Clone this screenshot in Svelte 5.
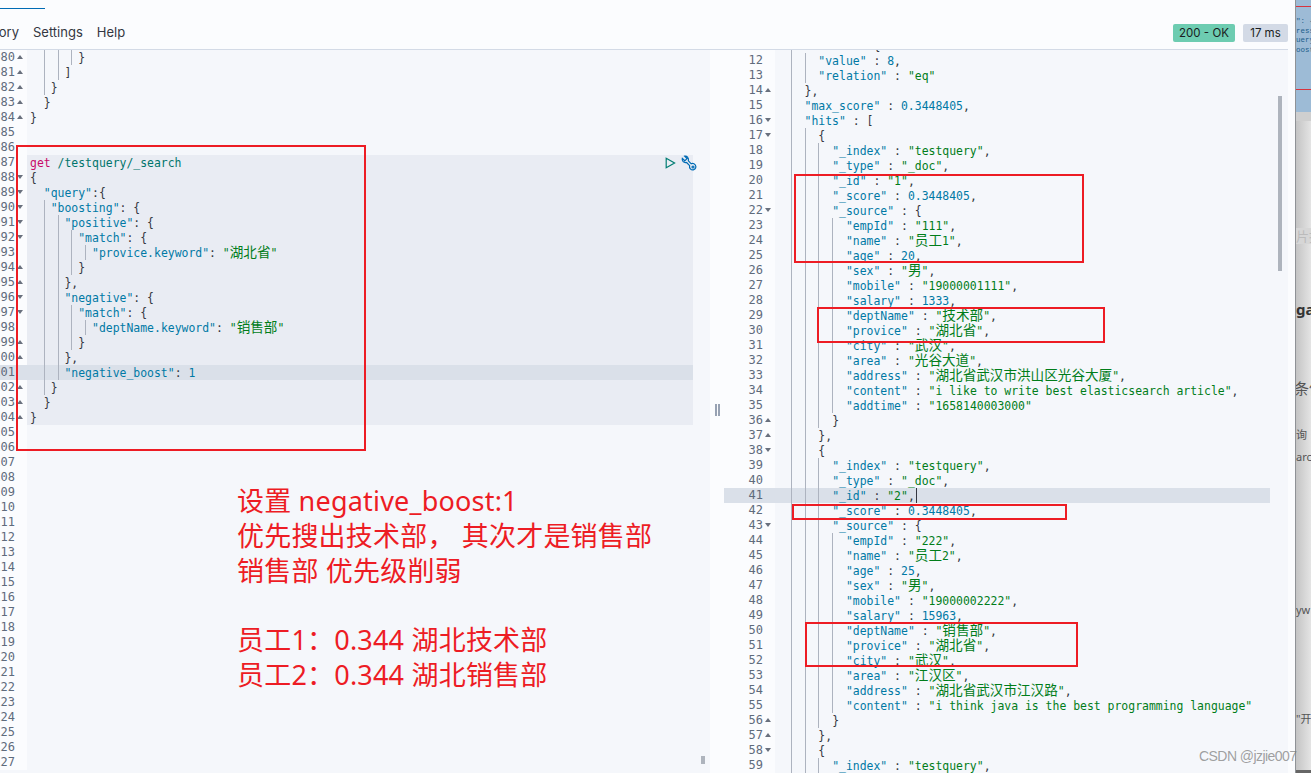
<script>
  const leftSrc = [
    [1080, "       }", "u"],
    [1081, "     ]", "u"],
    [1082, "   }", "u"],
    [1083, "  }", "u"],
    [1084, "}", "u"],
    [1085, ""],
    [1086, ""],
    [1087, "get /testquery/_search"],
    [1088, "{", "d"],
    [1089, '  "query":{', "d"],
    [1090, '   "boosting": {', "d"],
    [1091, '     "positive": {', "d"],
    [1092, '       "match": {', "d"],
    [1093, '         "provice.keyword": "湖北省"'],
    [1094, "       }", "u"],
    [1095, "     },", "u"],
    [1096, '     "negative": {', "d"],
    [1097, '       "match": {', "d"],
    [1098, '         "deptName.keyword": "销售部"'],
    [1099, "       }", "u"],
    [1100, "     },", "u"],
    [1101, '     "negative_boost": 1'],
    [1102, "   }", "u"],
    [1103, "  }", "u"],
    [1104, "}", "u"]
  ];
  for (let n = 1105; n <= 1127; n++) leftSrc.push([n, ""]);

  const rightSrc = [
    [11, '    "total" : {', "d"],
    [12, '      "value" : 8,'],
    [13, '      "relation" : "eq"'],
    [14, "    },", "u"],
    [15, '    "max_score" : 0.3448405,'],
    [16, '    "hits" : [', "d"],
    [17, "      {", "d"],
    [18, '        "_index" : "testquery",'],
    [19, '        "_type" : "_doc",'],
    [20, '        "_id" : "1",'],
    [21, '        "_score" : 0.3448405,'],
    [22, '        "_source" : {', "d"],
    [23, '          "empId" : "111",'],
    [24, '          "name" : "员工1",'],
    [25, '          "age" : 20,'],
    [26, '          "sex" : "男",'],
    [27, '          "mobile" : "19000001111",'],
    [28, '          "salary" : 1333,'],
    [29, '          "deptName" : "技术部",'],
    [30, '          "provice" : "湖北省",'],
    [31, '          "city" : "武汉",'],
    [32, '          "area" : "光谷大道",'],
    [33, '          "address" : "湖北省武汉市洪山区光谷大厦",'],
    [34, '          "content" : "i like to write best elasticsearch article",'],
    [35, '          "addtime" : "1658140003000"'],
    [36, "        }", "u"],
    [37, "      },", "u"],
    [38, "      {", "d"],
    [39, '        "_index" : "testquery",'],
    [40, '        "_type" : "_doc",'],
    [41, '        "_id" : "2",'],
    [42, '        "_score" : 0.3448405,'],
    [43, '        "_source" : {', "d"],
    [44, '          "empId" : "222",'],
    [45, '          "name" : "员工2",'],
    [46, '          "age" : 25,'],
    [47, '          "sex" : "男",'],
    [48, '          "mobile" : "19000002222",'],
    [49, '          "salary" : 15963,'],
    [50, '          "deptName" : "销售部",'],
    [51, '          "provice" : "湖北省",'],
    [52, '          "city" : "武汉",'],
    [53, '          "area" : "江汉区",'],
    [54, '          "address" : "湖北省武汉市江汉路",'],
    [55, '          "content" : "i think java is the best programming language"'],
    [56, "        }", "u"],
    [57, "      },", "u"],
    [58, "      {", "d"],
    [59, '        "_index" : "testquery",']
  ];

  const notes = [
    "设置 negative_boost:1",
    "优先搜出技术部， 其次才是销售部",
    "销售部 优先级削弱",
    "\u00a0",
    "员工1：0.344 湖北技术部",
    "员工2：0.344 湖北销售部"
  ];

  const bits = [
    { y: 228, cls: "tag", t: "片找" },
    { y: 301, cls: "bold", t: "ga" },
    { y: 380, cls: "big", t: "条件" },
    { y: 427, cls: "small", t: "询" },
    { y: 449, cls: "small", t: "arc" },
    { y: 602, cls: "small", t: "yw" },
    { y: 711, cls: "small", t: '"开' }
  ];

  // split one source line into coloured pieces
  function tokens(text) {
    const out = [];
    if (text.startsWith("get ")) {
      out.push({ c: "method", t: "get" }, { c: "", t: " " }, { c: "url", t: text.slice(4) });
      return out;
    }
    const re = /"[^"]*"(\s*:)?|-?\d+(\.\d+)?|[^"\d]+/g;
    let m;
    while ((m = re.exec(text))) {
      const s = m[0];
      if (s[0] === '"' && m[1]) {
        const end = s.lastIndexOf('"') + 1;
        out.push({ c: "key", t: s.slice(0, end) }, { c: "", t: s.slice(end) });
      } else if (s[0] === '"') {
        s.split(/([\u4e00-\u9fff]+)/).forEach((part, i) => {
          if (part) out.push({ c: i % 2 ? "str cjk" : "str", t: part });
        });
      } else if (/^-?\d/.test(s)) {
        out.push({ c: "num", t: s });
      } else {
        out.push({ c: "", t: s });
      }
    }
    return out;
  }

  function parse([n, src, fold]) {
    const body = src.trimStart();
    const indent = src.length - body.length;
    const guides = [];
    for (let col = 2; col < indent; col += 2) guides.push(src.slice(col, Math.min(col + 2, indent)));
    return { n, fold, lead: src.slice(0, Math.min(indent, 2)), guides, parts: tokens(body) };
  }

  const left = leftSrc.map(parse);
  const right = rightSrc.map(parse);
</script>

{#snippet line(row, cls)}
  <div class="row {cls}">
    <div class="gut">
      <span>{row.n}</span>
      <i class="fold {row.fold || ''}"></i>
    </div>
    <div class="code">{row.lead}{#each row.guides as g}<span class="guide">{g}</span>{/each}{#each row.parts as p}<span class={p.c}>{p.t}</span>{/each}{#if row.n === 41}<span class="cursor"></span>{/if}</div>
  </div>
{/snippet}

<div class="screen">
  <div class="app">
    <div class="topbar">
      <div class="tabline"></div>
      <nav>
        <span>History</span>
        <span>Settings</span>
        <span>Help</span>
      </nav>
      <div class="badges">
        <span class="badge ok">200 - OK</span>
        <span class="badge time">17 ms</span>
      </div>
    </div>

    <div class="panes">
      <section class="pane input">
        {#each left as row}
          {@render line(row, (row.n >= 1087 && row.n <= 1104 ? "sel " : "") + (row.n === 1101 ? "active" : ""))}
        {/each}
        <div class="tools">
          <svg width="11" height="12" viewBox="0 0 11 12" fill="none" stroke="#017d73" stroke-width="1.2"><path d="M1.2 1.2 L9.6 6 L1.2 10.8 Z" /></svg>
          <svg width="16" height="16" viewBox="0 0 16 16" fill="none" stroke="#006bb4" stroke-width="1.2"><path d="M3.6 1.2 L6 3.6 L3.8 5.8 L1.3 3.4 C0.6 6 2.8 8.2 5.6 7.5 L8.6 10.6 C8 13.2 10 15.2 12.4 14.8 C14.8 14.2 15.6 11.6 14.2 9.8 C13 8.4 11.4 8.2 10.2 8.8 L7.4 5.8 C8 3 5.8 0.6 3.6 1.2 Z" /><circle cx="12" cy="12" r="1" /></svg>
        </div>
        <div class="thumb"></div>
      </section>

      <div class="split"><b></b><b></b></div>

      <section class="pane output">
        <div class="scroller">
          {#each right as row}
            {@render line(row, row.n === 41 ? "active" : "")}
          {/each}
        </div>
        <div class="scrollbar"></div>
      </section>
    </div>
  </div>

  <aside class="strip">
    <div class="shot">
      <span>{'": {'}</span>
      <span>ress</span>
      <span>uery</span>
      <span>oost</span>
    </div>
    <div class="band"></div>
    {#each bits as b}
      <span class="bit {b.cls}" style="top: {b.y}px">{b.t}</span>
    {/each}
    <div class="foot"></div>
  </aside>

  <div class="box b1"></div>
  <div class="box b2"></div>
  <div class="box b3"></div>
  <div class="box b4"></div>
  <div class="box b5"></div>

  <div class="notes">
    {#each notes as t}
      <div>{t}</div>
    {/each}
  </div>

  <div class="mark">CSDN @jzjie007</div>
</div>

<style>
  :global(body) {
    margin: 0;
    background: #fff;
  }

  .screen {
    position: relative;
    display: flex;
    width: 1311px;
    height: 773px;
    overflow: hidden;
  }

  .app {
    width: 1295px;
    display: flex;
    flex-direction: column;
    background: #fbfcfe;
    font-family: Inter, "Noto Sans", sans-serif;
  }

  .topbar {
    position: relative;
    flex: none;
    height: 49px;
    margin-right: 7px;
    display: flex;
    align-items: flex-start;
    justify-content: space-between;
    border-bottom: 1px solid #d3dae6;
  }

  .tabline {
    position: absolute;
    left: 0;
    top: 8px;
    width: 45px;
    height: 1px;
    background: #006bb4;
  }

  nav {
    display: flex;
    gap: 14px;
    margin: 24px 0 0 -25px;
    font-size: 13px;
    line-height: 16px;
    color: #343741;
  }

  .badges {
    display: flex;
    gap: 8px;
    margin-top: 24px;
  }

  .badge {
    height: 18px;
    line-height: 18px;
    border-radius: 2px;
    font-size: 11.5px;
    text-align: center;
    color: #1a1c21;
  }

  .ok {
    width: 62px;
    background: #6dccb1;
  }

  .time {
    width: 45px;
    background: #d3dae6;
  }

  .panes {
    flex: 1;
    min-height: 0;
    display: flex;
    padding-right: 7px;
  }

  .pane {
    position: relative;
    overflow: hidden;
    background: #f5f7fb;
    font-family: "DejaVu Sans Mono", monospace;
    font-size: 11.45px;
    line-height: 17px;
  }

  .input {
    width: 710px;
    flex: none;
    padding-right: 17px;
    box-sizing: border-box;
  }

  .output {
    flex: 1;
    padding-right: 18px;
  }

  .scroller {
    margin-top: -12px;
  }

  .split {
    width: 14px;
    flex: none;
    display: flex;
    justify-content: center;
    align-items: center;
    gap: 1px;
    height: 720px;
  }

  .split b {
    width: 2px;
    height: 12px;
    background: #98a2b3;
  }

  .row {
    display: flex;
    height: 15px;
  }

  .row.sel {
    background: #e9ecf3;
  }

  .row.active {
    background: #dae0e9;
  }

  .gut {
    flex: none;
    display: flex;
    justify-content: flex-end;
    align-items: center;
    overflow: hidden;
    background: #fbfcfe;
    color: #5f6b7c;
    font-size: 12px;
  }

  .row.active .gut {
    background: #dae0e9;
  }

  .input .gut {
    width: 27px;
  }

  .output .gut {
    width: 51px;
  }

  .fold {
    flex: none;
    width: 12px;
    height: 5px;
    position: relative;
  }

  .fold.u::after,
  .fold.d::after {
    content: "";
    position: absolute;
    left: 2px;
    border-left: 3.5px solid transparent;
    border-right: 3.5px solid transparent;
  }

  .fold.u::after {
    top: 0;
    border-bottom: 4px solid #69707d;
  }

  .fold.d::after {
    top: 0;
    border-top: 4px solid #69707d;
  }

  .code {
    flex: 1;
    min-width: 0;
    white-space: pre;
    color: #343741;
  }

  .input .code {
    padding-left: 3px;
  }

  .output .code {
    padding-left: 2px;
  }

  .guide {
    display: inline-block;
    height: 15px;
    vertical-align: top;
    box-shadow: inset 1px 0 0 #adb3bf;
  }

  .key {
    color: #0079a5;
  }

  .str {
    color: #017d1a;
  }

  .num {
    color: #0079a5;
  }

  .method {
    color: #c80a68;
  }

  .url {
    color: #00756c;
  }

  .cjk {
    font-family: "Noto Sans CJK SC", sans-serif;
    font-size: 13.6px;
    line-height: 1;
  }

  .cursor {
    display: inline-block;
    width: 1px;
    height: 15px;
    vertical-align: top;
    margin-left: 1px;
    background: #343741;
  }

  .tools {
    position: absolute;
    left: 665px;
    top: 105px;
    display: flex;
    align-items: center;
    gap: 5px;
  }

  .thumb {
    position: absolute;
    left: 701px;
    top: 706px;
    width: 4px;
    height: 8px;
    background: #aeb4bd;
  }

  .scrollbar {
    position: absolute;
    left: 554px;
    top: 46px;
    width: 4px;
    height: 175px;
    background: #aeb4bd;
  }

  .strip {
    position: relative;
    flex: 1;
    overflow: hidden;
    border-left: 1px solid #8f9296;
    box-sizing: border-box;
    background: linear-gradient(90deg, #c4c4c4, #e4e4e4);
    font-family: "Noto Sans", "Noto Sans CJK SC", sans-serif;
    color: #555;
  }

  .shot {
    height: 82px;
    padding-top: 17px;
    padding-bottom: 13px;
    display: flex;
    flex-direction: column;
    white-space: pre;
    background:
      linear-gradient(#d8333d, #d8333d) 0 6px / 100% 1px no-repeat,
      linear-gradient(#d8333d, #d8333d) 0 89px / 100% 1px no-repeat,
      #9dbbd6;
    font-family: "Liberation Mono", monospace;
    font-size: 7.5px;
    line-height: 9.5px;
    color: #1d5e8c;
  }

  .band {
    height: 9px;
    background: #cfcfcf;
  }

  .bit {
    position: absolute;
    left: 0;
    font-size: 14px;
    line-height: 16px;
    white-space: nowrap;
  }

  .bit.tag {
    padding: 0 3px 0 0;
    color: #bbb;
    background: #d6d6d6;
    font-size: 13px;
  }

  .bit.bold {
    font-weight: 700;
    font-size: 15px;
    color: #333;
  }

  .bit.big {
    left: -2px;
    font-size: 15px;
  }

  .bit.small {
    font-size: 11px;
  }

  .foot {
    position: absolute;
    left: 0;
    right: 0;
    bottom: 0;
    height: 3px;
    background: #666;
  }

  .box {
    position: absolute;
    border: 2px solid #ed1c24;
    box-sizing: border-box;
  }

  .b1 {
    left: 16px;
    top: 145px;
    width: 350px;
    height: 306px;
  }

  .b2 {
    left: 794px;
    top: 174px;
    width: 290px;
    height: 89px;
  }

  .b3 {
    left: 817px;
    top: 307px;
    width: 288px;
    height: 36px;
  }

  .b4 {
    left: 792px;
    top: 504px;
    width: 275px;
    height: 16px;
  }

  .b5 {
    left: 805px;
    top: 622px;
    width: 273px;
    height: 45px;
  }

  .notes {
    position: absolute;
    left: 237px;
    top: 484px;
    font-family: "Noto Sans", "Noto Sans CJK SC", sans-serif;
    font-size: 27px;
    line-height: 34.8px;
    letter-spacing: 0.2px;
    color: #ed1c24;
    white-space: pre;
  }

  .mark {
    position: absolute;
    left: 1199px;
    top: 747px;
    font-family: "Liberation Sans", sans-serif;
    font-size: 14px;
    line-height: 18px;
    letter-spacing: -0.55px;
    color: rgba(120, 120, 120, 0.7);
    white-space: nowrap;
  }
</style>
